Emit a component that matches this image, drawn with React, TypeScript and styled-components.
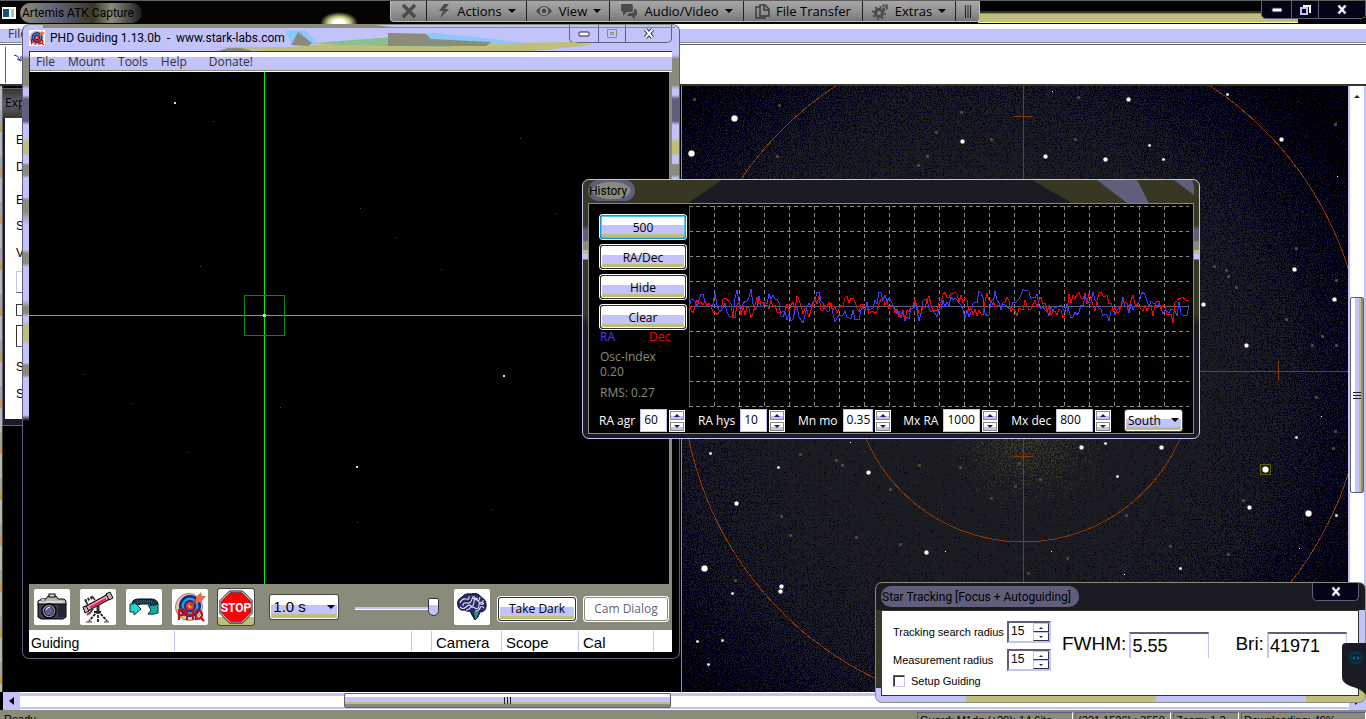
import React from "react";
import styled, { createGlobalStyle, css } from "styled-components";

const c = {
  lav: "#c3c3fb",
  olive: "#8b8b7b",
  khaki: "#bfbf7b",
  night: "#1b1b23",
  moss: "#373723",
  slate: "#5f5f7b",
  rust: "#8b3703",
};
const ui = `"Open Sans", "Noto Sans", sans-serif`;
const caption = `Roboto, "Open Sans", sans-serif`;
const arial = `"Liberation Sans", Arial, sans-serif`;
const gloss = `linear-gradient(#fff 0 42%, ${c.lav} 42% 80%, ${c.khaki} 80%)`;

const GlobalStyle = createGlobalStyle`
  * { box-sizing: border-box; }
  html, body { margin: 0; height: 100%; overflow: hidden; background: #000; }
  body { font: 12px/16px ${ui}; color: #000; }
  button, input, select { font: inherit; color: #000; margin: 0; padding: 0; border-radius: 0; }
  button { background: none; border: 0; }
  svg { display: block; flex: none; }
`;

/* ---------- main capture application ---------- */
const Shell = styled.div`
  height: 100vh;
  display: flex;
  flex-direction: column;
  overflow: hidden;
  position: relative;
  border-top: 1px solid #5f5f5f;
`;
const AppTitle = styled.header`
  height: 23px;
  flex: none;
  display: flex;
  align-items: center;
  gap: 4px;
  padding-left: 2px;
  background:
    linear-gradient(#000 0 10px, ${c.moss} 10px 12px, ${c.olive} 12px 13px, ${c.khaki} 13px 21px, #ffff8b 21px 22px, #000 22px) 978px 0 / 320px 23px no-repeat,
    radial-gradient(closest-side, #fff 30%, ${c.khaki} 60%, transparent) 320px 11px / 38px 22px no-repeat,
    #040404;
`;
const AppName = styled.h1`
  margin: 0;
  padding: 0 8px 0 2px;
  font: 12px/20px ${caption};
  border-radius: 10px;
  background: linear-gradient(90deg, ${c.olive}, ${c.slate} 30%, ${c.moss} 60%, ${c.olive} 75%, ${c.night});
`;
const Captions = styled.div<{ $dark?: boolean }>`
  margin-left: auto;
  align-self: flex-start;
  display: flex;
  height: 18px;
  border: 1px solid ${(p) => (p.$dark ? c.slate : c.slate)};
  border-top: 0;
  border-radius: 0 0 5px 5px;
  ${(p) => p.$dark && css`background: #040418;`}
`;
const Caption = styled.button<{ $w: number; $line?: string }>`
  width: ${(p) => p.$w}px;
  display: grid;
  place-items: center;
  & + & { border-left: 1px solid ${(p) => p.$line || c.slate}; }
`;
const AppMenu = styled.nav`
  height: 21px;
  flex: none;
  padding: 0 8px;
  line-height: 20px;
  color: #333;
  border-bottom: 1px solid ${c.slate};
  background: linear-gradient(#fff 0 5px, ${c.lav} 5px 18px, ${c.olive} 18px 19px, #fff 19px);
`;
const AppTools = styled.div`
  height: 41px;
  flex: none;
  padding: 2px 0 0 5px;
  background: #fff;
  border-bottom: 2px solid ${c.moss};
`;
const Workspace = styled.main`
  flex: 1;
  min-height: 0;
  display: flex;
`;
const DesktopEdge = styled.div`
  width: 3px;
  background: repeating-linear-gradient(#b7b7b7 0 24px, #a3a3a3 24px 38px, #bf9b4b 38px 46px);
  border-right: 1px solid ${c.moss};
`;
const GuidePane = styled.section`
  width: 679px;
  flex: none;
  background: #000;
  border-right: 1px solid #00ef0b;
`;
const Explorer = styled.aside`
  width: 200px;
  margin-top: 3px;
  background: ${c.night};
  border-bottom: 6px solid ${c.night};
  outline: 1px solid ${c.slate};
`;
const ExplorerTitle = styled.h2`
  margin: 0;
  height: 29px;
  padding-left: 2px;
  font: 12px/28px ${ui};
  background: linear-gradient(${c.moss}, ${c.slate} 50%, ${c.moss});
`;
const ExplorerBody = styled.div`
  height: 301px;
  padding: 15px 0 0 11px;
  margin-left: 2px;
  background: #fff;
  font: 12px/14px ${arial};
`;
const ExplorerRow = styled.div<{ $h: number }>`
  height: ${(p) => p.$h}px;
`;
const ExplorerBox = styled.div<{ $h: number; $gap: number; $c?: string }>`
  height: ${(p) => p.$h}px;
  margin-bottom: ${(p) => p.$gap}px;
  border: 1px solid ${(p) => p.$c || "#333"};
  border-bottom-color: ${c.slate};
`;
const SkyPane = styled.section`
  flex: 1;
  min-width: 0;
  overflow: hidden;
  background: #000;
  svg { width: 100%; height: 100%; }
`;
const VScroll = styled.div`
  width: 18px;
  flex: none;
  display: flex;
  flex-direction: column;
  background: #fff;
  border: solid ${c.lav};
  border-width: 0 2px;
`;
const VEnd = styled.button`
  height: 20px;
  display: grid;
  place-items: center;
`;
const VTrack = styled.div`
  flex: 1;
  display: grid;
  grid-template-rows: 191fr 196fr 179fr;
`;
const VThumb = styled.button`
  grid-row: 2;
  display: grid;
  place-items: center;
  border: 1px solid ${c.slate};
  border-radius: 2px;
  background: linear-gradient(90deg, #fff 0 4px, ${c.lav} 4px 8px, ${c.khaki} 8px 10px, ${c.olive} 10px 12px, ${c.lav} 12px);
`;
const HScroll = styled.div`
  height: 18px;
  flex: none;
  display: flex;
  margin-left: 3px;
  background: linear-gradient(#fff 0 1px, ${c.lav} 1px 4px, #fff 4px 15px, ${c.lav} 15px 17px, #fff 17px);
`;
const HEnd = styled.button`
  width: 17px;
  display: grid;
  place-items: center;
  background: ${c.lav};
`;
const HTrack = styled.div`
  flex: 1;
  display: grid;
  grid-template-columns: 324fr 327fr 677fr;
`;
const HThumb = styled.button`
  grid-column: 2;
  height: 15px;
  margin-top: 1px;
  display: grid;
  place-items: center;
  border: 1px solid ${c.slate};
  border-radius: 2px;
  background: linear-gradient(#fff 0 3px, ${c.lav} 3px 8px, ${c.khaki} 8px 10px, ${c.olive} 10px);
`;
const AppStatus = styled.footer`
  height: 9px;
  flex: none;
  overflow: hidden;
  display: flex;
  gap: 2px;
  padding: 2px 0 0 2px;
  background: ${c.olive};
  font: 11px/14px ${arial};
`;
const StatusCell = styled.span<{ $w?: number }>`
  ${(p) => (p.$w ? css`width: ${p.$w}px; border: 1px solid ${c.slate}; border-right-color: #fff;` : css`flex: 1;`)}
  padding-left: 2px;
  height: 16px;
  white-space: nowrap;
`;

/* ---------- remote session bar ---------- */
const SessionBar = styled.nav`
  position: absolute;
  left: 390px;
  top: 0;
  height: 21px;
  display: flex;
  border: 1px solid #bbb;
  border-top: 0;
  border-radius: 0 0 4px 4px;
  background: linear-gradient(#a7a7a7, #8f8f8f 60%, #777);
  overflow: hidden;
`;
const SessionButton = styled.button<{ $w: number }>`
  width: ${(p) => p.$w}px;
  display: flex;
  align-items: center;
  justify-content: center;
  gap: 6px;
  font: 13px/20px ${ui};
  white-space: nowrap;
  & + & { border-left: 1px solid #222; }
`;

/* ---------- floating windows ---------- */
const Guiding = styled.section`
  position: absolute;
  left: 22px;
  top: 23px;
  width: 658px;
  display: flex;
  flex-direction: column;
  padding: 0 7px 5px 6px;
  border: 1px solid ${c.slate};
  border-top-color: ${c.olive};
  border-radius: 7px;
  background: linear-gradient(${c.lav} 0 30px, ${c.olive} 34px 60px, ${c.lav} 64px 70px, ${c.slate} 74px 96px, ${c.lav} 100px 112px, ${c.khaki} 118px 128px, ${c.lav} 132px 138px, ${c.olive} 140px 150px, ${c.lav} 153px 172px, ${c.olive} 175px 186px, ${c.lav} 200px 225px, ${c.olive} 228px 238px, ${c.lav} 242px 275px, ${c.olive} 282px 288px, ${c.lav} 292px 296px, ${c.khaki} 300px 315px, ${c.lav} 320px 338px, ${c.olive} 340px 350px, ${c.lav} 353px 390px, #000 396px);
`;
const GuideTitle = styled.header`
  height: 26px;
  display: flex;
  align-items: center;
  gap: 5px;
  position: relative;
`;
const Blotches = styled.svg`
  position: absolute;
  left: -6px;
  top: 0;
`;
const GuideName = styled.h2`
  margin: 0;
  font: 12px/24px ${caption};
  white-space: pre;
  position: relative;
`;
const GuideMenu = styled.nav`
  height: 21px;
  display: flex;
  gap: 13px;
  padding: 3px 6px 0;
  border: solid #333;
  border-width: 1px 0 0 1px;
  background: linear-gradient(#fff 0 5px, ${c.lav} 5px 18px, ${c.olive} 18px 19px, #fff 19px);
  a { color: #333; text-decoration: none; line-height: 14px; }
  a:last-child { margin-left: 9px; }
`;
const GuideView = styled.div`
  height: 512px;
  background: #000;
  border-right: 3px solid ${c.olive};
`;
const GuideTools = styled.div`
  height: 46px;
  display: flex;
  align-items: center;
  justify-content: space-between;
  padding: 0 4px 0 5px;
  background: ${c.olive};
`;
const ToolRow = styled.div<{ $gap: number }>`
  display: flex;
  align-items: center;
  gap: ${(p) => p.$gap}px;
`;
const IconButton = styled.button<{ $framed?: boolean }>`
  width: 36px;
  height: 36px;
  display: grid;
  place-items: center;
  border-radius: 2px;
  background: #fff;
  ${(p) => p.$framed && css`
    background: linear-gradient(#fff 0 28px, ${c.khaki} 28px);
    outline: 1px solid #444;
  `}
`;
const SelectBox = styled.span<{ $w: number; $big?: boolean }>`
  position: relative;
  width: ${(p) => p.$w}px;
  height: ${(p) => (p.$big ? 26 : 23)}px;
  select {
    appearance: none;
    width: 100%;
    height: 100%;
    padding: 0 3px;
    border: 1px solid #444;
    border-radius: 3px;
    background: ${gloss};
    box-shadow: inset 0 0 0 1px #fff;
    ${(p) => p.$big && css`font: 15px/22px ${arial};`}
  }
  svg { position: absolute; right: 4px; top: ${(p) => (p.$big ? 11 : 9)}px; }
`;
const Gamma = styled.input`
  appearance: none;
  width: 84px;
  height: 20px;
  background: linear-gradient(transparent 10px, ${c.lav} 10px 12px, #fff 12px 13px, transparent 13px);
  &::-webkit-slider-thumb {
    appearance: none;
    width: 11px;
    height: 18px;
    border: 1px solid #333;
    border-radius: 2px 2px 6px 6px;
    background: linear-gradient(#fff 0 6px, ${c.lav} 6px);
  }
`;
const PushButton = styled.button<{ $w: number; $focus?: boolean }>`
  width: ${(p) => p.$w}px;
  height: 24px;
  border: 1px solid ${(p) => (p.$focus ? "#0b9fdb" : "#333")};
  border-radius: 3px;
  background: ${gloss};
  box-shadow: 0 0 0 1px #fff, inset 0 0 0 1px ${(p) => (p.$focus ? "#4bc7f7" : "#fff")};
  &:disabled { background: #fff; color: ${c.slate}; border-color: ${c.olive}; }
`;
const DarkButtons = styled.div`
  display: flex;
  gap: 8px;
  padding-top: 4px;
`;
const GuideStatus = styled.footer`
  height: 23px;
  display: flex;
  align-items: center;
  background: #fff;
  border-bottom: 1px solid #000;
  font: 15px/24px ${arial};
`;
const GuideCell = styled.span<{ $w: number; $small?: boolean }>`
  width: ${(p) => p.$w}px;
  height: 20px;
  padding-left: ${(p) => (p.$small ? 2 : 4)}px;
  border-right: 1px solid ${c.lav};
  ${(p) => p.$small && css`font-size: 14px;`}
`;

const History = styled.section`
  position: absolute;
  left: 582px;
  top: 178px;
  width: 618px;
  padding: 0 5px 4px;
  border: 1px solid ${c.lav};
  border-radius: 7px;
  background: linear-gradient(${c.moss} 0 45px, ${c.slate} 50px 60px, ${c.olive} 62px 70px, ${c.khaki} 70px 74px, ${c.lav} 74px 79px, ${c.moss} 80px 135px, ${c.night} 145px);
`;
const HistoryTitle = styled.header`
  height: 23px;
  position: relative;
  overflow: hidden;
`;
const Glow = styled.h2<{ $olive?: boolean }>`
  margin: 0;
  display: inline-block;
  position: relative;
  padding: 1px 8px 0 1px;
  font: 12px/20px ${caption};
  border-radius: 10px;
  background: ${(p) => (p.$olive ? `radial-gradient(${c.olive} 55%, ${c.slate} 60%)` : c.slate)};
`;
const HistoryBody = styled.div`
  background: #000;
  border: 1px solid ${c.olive};
  padding: 2px 4px 0 10px;
`;
const HistoryTop = styled.div`
  display: flex;
  gap: 2px;
`;
const HistorySide = styled.div`
  width: 88px;
  display: flex;
  flex-direction: column;
  gap: 6px;
  padding: 9px 1px 0;
  color: ${c.olive};
  line-height: 15px;
`;
const Legend = styled.div`
  display: flex;
  gap: 34px;
  height: 14px;
  margin-top: -6px;
  line-height: 16px;
  span:first-child { color: #3f3fff; }
  span:last-child { color: #f00; }
`;
const Reading = styled.p`
  margin: 0;
`;
const HistoryForm = styled.form`
  display: flex;
  align-items: center;
  height: 25px;
  margin-top: 1px;
  color: #fff;
  justify-content: space-between;
  padding-right: 6px;
`;
const Field = styled.label`
  display: flex;
  align-items: center;
  gap: 5px;
`;
const Num = styled.input<{ $w: number }>`
  width: ${(p) => p.$w}px;
  height: 23px;
  padding: 0 0 3px 3px;
  border: 1px solid ${c.lav};
  background: #fff;
`;
const Spin = styled.span<{ $classic?: boolean }>`
  display: grid;
  grid-template-rows: 1fr 1fr;
  width: 16px;
  height: ${(p) => (p.$classic ? 18 : 22)}px;
  margin-left: ${(p) => (p.$classic ? 0 : -3)}px;
  button {
    display: grid;
    place-items: center;
    border: 1px solid #fff;
    outline: 1px solid ${c.olive};
    outline-offset: -2px;
    background: linear-gradient(#fff 60%, ${c.lav} 60%);
    ${(p) => p.$classic && css`
      background: #fff;
      outline: 0;
      border-color: ${c.lav} #333 #333 ${c.lav};
    `}
  }
`;

const Tracking = styled.section`
  position: absolute;
  right: 0;
  bottom: 16px;
  width: 491px;
  padding: 0 6px 6px 5px;
  border: 1px solid ${c.olive};
  border-radius: 7px;
  background: linear-gradient(${c.night} 0 27px, transparent 27px), linear-gradient(90deg, ${c.moss} 50%, ${c.lav} 50%) 0 0 / 100% 105px no-repeat,
    linear-gradient(90deg, ${c.lav} 90px, ${c.khaki} 90px 280px, ${c.lav} 280px 430px, ${c.khaki} 430px);
`;
const TrackTitle = styled.header`
  height: 27px;
  display: flex;
  align-items: center;
`;
const TrackBody = styled.form`
  height: 86px;
  display: flex;
  border: 1px solid #333;
  background: #fff;
  font: 11px/14px ${arial};
  padding: 10px 0 0 11px;
`;
const TrackRows = styled.div`
  width: 158px;
  display: flex;
  flex-direction: column;
  gap: 6px;
`;
const TrackRow = styled.label`
  display: flex;
  justify-content: space-between;
  align-items: center;
`;
const Sunken = styled.span`
  display: flex;
  width: 44px;
  height: 22px;
  border: 2px solid;
  border-color: ${c.slate} ${c.lav} ${c.lav} ${c.slate};
  input { width: 24px; border: 0; padding: 0 0 2px 2px; font-size: 12px; }
`;
const Tick = styled.label`
  display: flex;
  align-items: center;
  gap: 6px;
  margin-top: -3px;
  input {
    appearance: none;
    width: 12px;
    height: 12px;
    border: 1px solid;
    border-color: ${c.slate} ${c.lav} ${c.lav} ${c.slate};
    box-shadow: inset 1px 1px #333;
  }
`;
const Gauge = styled.label<{ $ml: number }>`
  display: flex;
  gap: 3px;
  height: 26px;
  margin: 11px 0 0 ${(p) => p.$ml}px;
  font: 19px/24px ${arial};
  input {
    width: 80px;
    border: solid;
    border-width: 2px 1px 0 2px;
    border-color: ${c.slate} ${c.lav};
    padding: 0 0 0 1px;
    font-size: 18px;
  }
`;
const EdgeTab = styled.button`
  position: absolute;
  right: 0;
  bottom: 24px;
  width: 24px;
  height: 52px;
`;

/* ---------- drawings ---------- */
const Down = ({ s = 4, fill = "#000" }: { s?: number; fill?: string }) => (
  <svg width={s * 2} height={s} viewBox="0 0 8 4"><path d="M0 0h8L4 4z" fill={fill} /></svg>
);
const Up = ({ s = 3 }: { s?: number }) => <svg width={s * 2} height={s} viewBox="0 0 8 4"><path d="M0 4h8L4 0z" fill="#23233f" /></svg>;
const Grip = ({ v }: { v?: boolean }) => (
  <svg width="9" height="9" viewBox="0 0 9 9">
    <path d={v ? "M0 1.5h8M0 4.5h8M0 7.5h8" : "M1.5 1v7M4.5 1v7M7.5 1v7"} stroke="#222" strokeWidth="1" />
  </svg>
);
const MinGlyph = () => <svg width="12" height="6"><rect x="1" y="1" width="10" height="4" rx="1" fill="#fff" stroke="#23233b" /></svg>;
const CloseGlyph = ({ light }: { light?: boolean }) => (
  <svg width="12" height="11" viewBox="0 0 12 11">
    <path d="M2.5 1.5l7 8M9.5 1.5l-7 8" stroke={light ? "#23234b" : "#23233b"} strokeWidth="4" />
    <path d="M2.5 1.5l7 8M9.5 1.5l-7 8" stroke="#fff" strokeWidth="2" />
  </svg>
);

type Star = [number, number, number];
const stars: Star[] = [
  [691, 153, 3], [734, 118, 3], [962, 141, 2], [1045, 156, 2], [1105, 159, 2], [1128, 99, 2], [1149, 145, 1],
  [1163, 159, 1], [1052, 91, 0], [1227, 94, 1], [1281, 139, 2], [1337, 176, 0], [1294, 269, 2], [1334, 299, 2],
  [1246, 345, 2], [1203, 304, 2], [1321, 416, 0], [1296, 437, 1], [1265, 469, 3], [710, 453, 1], [778, 467, 1],
  [736, 503, 2], [704, 568, 3], [732, 593, 1], [781, 586, 2], [780, 591, 2], [868, 472, 2], [926, 552, 2],
  [945, 551, 0], [1051, 551, 0], [1081, 447, 2], [1105, 443, 1], [1161, 447, 2], [1117, 476, 1], [1249, 507, 2],
  [1308, 513, 3], [1336, 515, 1], [1299, 548, 0], [1180, 568, 1], [1124, 574, 0], [850, 442, 0], [697, 641, 1],
  [722, 640, 1], [708, 664, 1],
];
const faint: Star[] = [
  [694, 99, 1], [936, 132, 1], [927, 156, 1], [991, 139, 1], [961, 112, 1], [1075, 139, 1], [1078, 97, 1], [918, 165, 1],
  [777, 156, 1], [779, 105, 1], [1335, 124, 1], [1296, 248, 1], [1336, 280, 1], [1286, 319, 1], [1336, 345, 1],
  [1214, 266, 1], [1226, 270, 1], [1228, 276, 1], [1236, 287, 1], [1316, 397, 1], [1335, 431, 1], [1333, 448, 1],
  [1322, 336, 1], [1312, 345, 1], [800, 454, 1], [836, 460, 1], [842, 465, 1], [919, 465, 1], [960, 467, 1], [890, 489, 1],
  [991, 498, 1], [1126, 515, 1], [735, 580, 1], [1067, 558, 1], [1170, 546, 1], [1228, 554, 1], [1243, 500, 1],
  [1019, 463, 1], [1040, 479, 1], [1015, 486, 1], [856, 537, 1], [900, 544, 1], [1028, 573, 1], [781, 516, 1], [790, 535, 1],
];

const Sky = () => (
  <svg viewBox="682 86 666 606" preserveAspectRatio="xMinYMin slice" role="img" aria-label="Star field">
    <defs>
      <radialGradient id="level" gradientUnits="userSpaceOnUse" cx="980" cy="390" r="430">
        <stop offset="0" stopColor="#e8e8e8" />
        <stop offset=".4" stopColor="#d4d4d4" />
        <stop offset=".72" stopColor="#a0a0a0" />
        <stop offset="1" stopColor="#585858" />
      </radialGradient>
      <radialGradient id="core" gradientUnits="userSpaceOnUse" cx="1028" cy="430" r="100">
        <stop offset="0" stopColor="#d4d4d4" />
        <stop offset=".4" stopColor="#a4a4a4" />
        <stop offset="1" stopColor="#404040" />
      </radialGradient>
      <filter id="grain" x="0" y="0" width="100%" height="100%" colorInterpolationFilters="sRGB">
        <feTurbulence type="fractalNoise" baseFrequency="0.83" numOctaves="2" seed="4" result="n" />
        <feColorMatrix in="n" values="1 0 0 0 0 1 0 0 0 0 1 0 0 0 0 0 0 0 0 1" result="g" />
        <feComposite in="SourceGraphic" in2="g" operator="arithmetic" k2="1" k3="1.1" k4="-0.55" />
        <feComponentTransfer>
          <feFuncR type="discrete" tableValues="0 0 .015 .106 .106" />
          <feFuncG type="discrete" tableValues="0 0 .015 .106 .106" />
          <feFuncB type="discrete" tableValues="0 0 .13 .137 .137" />
        </feComponentTransfer>
      </filter>
      <filter id="dust" x="0" y="0" width="100%" height="100%" colorInterpolationFilters="sRGB">
        <feTurbulence type="fractalNoise" baseFrequency="0.6" numOctaves="2" seed="9" result="n" />
        <feColorMatrix in="n" values="1 0 0 0 0 1 0 0 0 0 1 0 0 0 0 0 0 0 0 1" result="g" />
        <feComposite in="SourceGraphic" in2="g" operator="arithmetic" k2="1" k3="1.6" k4="-0.8" />
        <feColorMatrix values="0 0 0 0 .216 0 0 0 0 .216 0 0 0 0 .137 12 0 0 0 -8.4" />
      </filter>
    </defs>
    <rect x="682" y="86" width="666" height="606" fill="url(#level)" filter="url(#grain)" />
    <rect x="820" y="350" width="400" height="250" fill="url(#core)" filter="url(#dust)" />
    <g fill="none" stroke={c.rust} shapeRendering="crispEdges">
      <circle cx="1023" cy="371" r="171" />
      <circle cx="1023" cy="371" r="341" />
      <path d="M1023.500 86v606M682 371.500h666M1013 116.500h20M1013 456.500h20M1278.500 361v20" />
      <rect x="1260.500" y="464.500" width="10" height="10" stroke="#5f5f00" />
    </g>
    {faint.map(([x, y], i) => <rect key={i} x={x - 1} y={y - 1} width="3" height="3" rx="1" fill={i % 3 ? "#4b4b4b" : "#4b4b37"} />)}
    {stars.map(([x, y, r], i) =>
      r ? (
        <g key={i}>
          <circle cx={x + 0.5} cy={y + 0.5} r={r + 0.6} fill="#8b8b7b" opacity=".5" />
          <circle cx={x + 0.5} cy={y + 0.5} r={r === 1 ? 1.3 : r} fill="#fff" />
        </g>
      ) : <rect key={i} x={x} y={y} width="1" height="1" fill="#fff" />
    )}
  </svg>
);

const hotPixels: Star[] = [
  [174, 102, 2], [503, 375, 2], [356, 466, 2], [200, 266, 1], [213, 121, 1], [360, 208, 1], [280, 407, 1], [395, 237, 1],
  [131, 403, 1], [84, 374, 1], [555, 213, 1], [492, 509, 1], [188, 452, 1], [441, 269, 1], [520, 138, 1], [357, 522, 1],
];
const GuideField = () => (
  <svg width="640" height="512" viewBox="29 72 640 512" role="img" aria-label="Guide camera view">
    {hotPixels.map(([x, y, r], i) => <rect key={i} x={x} y={y} width={r} height={r} fill={r > 1 ? "#dfdfcf" : "#4b4b3b"} />)}
    <g fill="none" shapeRendering="crispEdges">
      <path d="M264.500 72v512" stroke="#00ef0b" />
      <path d="M29 315.500h640" stroke="#00ef0b" />
      <rect x="244.500" y="295.500" width="40" height="40" stroke="#008b0b" />
    </g>
    <rect x="263" y="314" width="3" height="3" fill="#9bff9b" />
  </svg>
);

const ra: number[][] = [
  [0, 8], [3, -10], [8, -3], [13, -12], [17, 3], [20, 0], [26, -12], [30, 3], [37, 0], [40, 8], [45, 8], [47, -14], [52, 3], [57, -8],
  [62, -12], [67, 10], [70, -8], [75, 0], [80, -12], [87, -6], [92, 6], [97, 8], [103, 10], [108, 0], [113, 17], [117, 5], [125, -7],
  [132, -10], [137, 10], [142, 0], [147, 14], [150, 3], [155, 10], [163, 8], [170, 12], [175, -2], [180, 3], [187, -7], [192, -10],
  [204, 0], [211, 5], [218, 12], [226, 0], [231, 14], [236, -10], [241, 6], [246, 8], [251, 3], [258, -5], [264, -8], [271, -3],
  [277, 12], [283, 0], [291, -11], [298, 8], [306, -11], [313, 0], [318, 6], [324, -6], [329, 3], [333, -12], [341, -12], [351, -4],
  [358, 6], [364, 6], [371, 2], [378, 3], [386, 11], [393, -4], [399, -8], [406, -9], [413, 10], [419, 10], [426, 5], [433, -6],
  [439, 3], [448, -3], [454, -13], [459, 3], [466, -8], [473, 6], [478, 5], [486, 8], [491, 0], [496, 7], [500, 4],
];
const dec: number[][] = [
  [0, 2], [2, 9], [6, -3], [12, -9], [17, 1], [24, 4], [29, 6], [35, -3], [40, 0], [46, 12], [48, -2], [53, 5], [58, 5], [63, 8], [68, -4],
  [75, -6], [80, 2], [86, -5], [90, 8], [97, -2], [102, 3], [108, -4], [114, 7], [120, 6], [127, -6], [132, -2], [138, 3], [143, -3],
  [150, 9], [155, -5], [164, -8], [170, 3], [175, 0], [182, 4], [186, 7], [191, -3], [195, -8], [200, 2], [206, 3], [213, 8], [220, 9],
  [226, -3], [230, 4], [236, 2], [241, -6], [246, 7], [251, 1], [258, -14], [265, -8], [270, -10], [277, -2], [282, 5], [287, 6],
  [293, 9], [299, -10], [306, 2], [312, -3], [318, -5], [325, 4], [331, 6], [337, -2], [343, 3], [350, -6], [356, 3], [363, 4],
  [371, 3], [377, 12], [379, -10], [386, -6], [393, -10], [400, -7], [406, 6], [412, -16], [418, -5], [424, 2], [430, 7], [437, -2],
  [444, -5], [450, 2], [455, 3], [462, -2], [464, 9], [469, -3], [476, 4], [480, 4], [484, 13], [485, -4], [491, -3], [496, -8], [500, -7],
];
/* Resamples the key readings every two pixels and adds the seeing jitter. */
const trace = (keys: number[][], seed: number) => {
  const out: string[] = [];
  let s = seed;
  let k = 0;
  for (let x = 0; x <= 500; x += 2) {
    while (k < keys.length - 2 && keys[k + 1][0] < x) k++;
    const [a, b] = [keys[k], keys[k + 1]];
    s = (s * 16807) % 2147483647;
    const y = a[1] + ((b[1] - a[1]) * (x - a[0])) / (b[0] - a[0]) + (s / 2147483647 - 0.5) * 12;
    out.push(`${x} ${Math.round(100 + y)}`);
  }
  return out.join(" ");
};
const Graph = () => (
  <svg width="501" height="201" viewBox="0 0 501 201" role="img" aria-label="Guiding history">
    <g stroke={c.olive} strokeDasharray="4 3" shapeRendering="crispEdges">
      {Array.from({ length: 9 }, (_, i) => i !== 4 && <path key={`h${i}`} d={`M0 ${i * 25 + 0.5}H500`} />)}
      {Array.from({ length: 19 }, (_, i) => <path key={`v${i}`} d={`M${i * 25 + 25.5} 0V200`} />)}
    </g>
    <path d="M0.500 0V200M0 100.500H500" stroke={c.slate} shapeRendering="crispEdges" />
    <g fill="none" shapeRendering="crispEdges">
      <polyline points={trace(ra, 71)} stroke="#3f3fff" />
      <polyline points={trace(dec, 913)} stroke="#f00" />
    </g>
  </svg>
);

const TargetArt = styled.svg`
  position: relative;
`;
const Target = ({ size }: { size: number }) => (
  <TargetArt width={size} height={size} viewBox="0 0 32 32">
    <rect width="32" height="32" fill="#fff" />
    <circle cx="15" cy="16" r="13.500" fill="#efc79b" stroke="#8b7b7b" />
    <circle cx="16" cy="15" r="11" fill="#13278b" />
    <circle cx="16" cy="15" r="8.500" fill="#2b9bdf" />
    <circle cx="16" cy="15" r="6" fill="#13278b" />
    <circle cx="16" cy="15" r="4" fill="#ef3b1b" />
    <circle cx="16" cy="15" r="1.800" fill="#ffdf3b" />
    <path d="M16 15L27 5" stroke="#b73b1b" strokeWidth="2" />
    <path d="M22 6l5-5 1 4 4 0-5 6-5 1z" fill="#ef6b4b" />
    <g fill="none" stroke="#bf0f1b" strokeWidth="2.200">
      <path d="M5 29V19q6-2 6 2t-6 3M13 18v11M19 18v11M13 24h6M22 19v9q6 0 6-4.500T22 19M26 26l4 4" />
    </g>
  </TargetArt>
);
const CameraIcon = () => (
  <svg width="32" height="32" viewBox="0 0 32 32">
    <path d="M2 10l4-2h4l2-3h8l2 3h6l2 2v4H2z" fill="#b7b7ab" stroke="#000" />
    <rect x="13" y="3" width="6" height="3" fill="#dfdfdf" stroke="#000" />
    <path d="M2 13h28v13l-3 2H5l-3-2z" fill="#3b3b53" stroke="#000" />
    <path d="M22 14h7v12h-7z" fill="#23233b" />
    <path d="M3 11h24" stroke="#fff" />
    <rect x="5" y="8" width="4" height="2" fill="#fff" stroke="#333" strokeWidth=".6" />
    <circle cx="13" cy="20" r="7" fill="#8b8b9b" stroke="#000" strokeWidth="1.400" />
    <circle cx="13" cy="20" r="4.600" fill="#5f5f8b" stroke="#23233b" />
    <path d="M10 19q1-3 4-3" stroke="#fff" fill="none" />
  </svg>
);
const ScopeIcon = () => (
  <svg width="34" height="34" viewBox="0 0 34 34">
    <path d="M5 19L29 6" stroke="#000" strokeWidth="6" />
    <path d="M6 18.500L28 6.500" stroke="#f7a3bf" strokeWidth="4" />
    <path d="M9 17.500L25 9" stroke="#e7234b" strokeWidth="2" />
    <path d="M25 4l4-2 3 6-4 2zM2 17l3-1 3 5-4 2z" fill="#b7b7b7" stroke="#000" />
    <path d="M4 11l8-4" stroke="#333" strokeWidth="3" strokeDasharray="2 1" />
    <path d="M4 10l3 5M11 6l3 4" stroke="#333" strokeWidth="1.500" />
    <path d="M17 15v6" stroke="#333" strokeWidth="3" />
    <path d="M12 19l-4 5" stroke="#333" strokeWidth="2" />
    <path d="M6 25l2-2" stroke="#c71b2b" strokeWidth="2" />
    <path d="M17 21L8 31M17 21l9 10M17 21v11M13 22h8" stroke="#222" strokeWidth="1.800" strokeDasharray="3 1" />
    <path d="M5 32h6M23 32h5" stroke="#333" />
  </svg>
);
const LoopIcon = () => (
  <svg width="32" height="32" viewBox="0 0 32 32">
    <path d="M4 12Q5 8 11 8h12q6 0 7 5l-2 3q-3-3-7-3h-8q-4 0-6 4z" fill="#133b4b" stroke="#000" />
    <path d="M9 10h15M7 12h20" stroke="#1b7b8b" strokeDasharray="1 1" />
    <path d="M2 13h4v-2l7 7-7 6v-3H2z" fill="#2bd3d3" stroke="#003b3b" />
    <path d="M20 14q4 2 10-1v9q-5 2-10 1l3-4z" fill="#13abab" stroke="#003b3b" />
  </svg>
);
const StopIcon = () => (
  <svg width="34" height="34" viewBox="0 0 34 34">
    <path d="M10.500 1h13L33 10.500v13L23.500 33h-13L1 23.500v-13z" fill="#fff" stroke="#000" />
    <path d="M11 2.500h12L31.500 11v12L23 31.500H11L2.500 23V11z" fill="#fb0007" stroke="#000" strokeWidth=".5" />
    <text x="17" y="22" textAnchor="middle" fill="#fff" fontFamily="'Liberation Sans Narrow', Roboto, sans-serif" fontWeight="700" fontSize="12">STOP</text>
  </svg>
);
const BrainIcon = () => (
  <svg width="32" height="32" viewBox="0 0 32 32">
    <path d="M2 15Q0 9 6 6q3-4 9-3 7-2 10 3 6 3 5 10-1 5-6 5l-2 5-3 3-3-5-2-4q-3 1-5-1-6 1-7-4z" fill="#2b2b6b" stroke="#0b0b2b" />
    <path d="M17 20h7l-3 7-2 2z" fill="#2b8b8b" stroke="#0b2b2b" />
    <g fill="none" stroke="#e3e3f7" strokeWidth="1.100">
      <path d="M4 12q2-5 6-4t3-3M7 15q0-4 4-3t5-4 4 0 4-2M4 16q3 3 6 0t5-1 3-4 5 0 4-2M10 19q3 0 4-2t5 0 4-3 5-1M17 7q2 2 5 0M19 20q4 0 5-3t4 0" />
    </g>
  </svg>
);

const Spinner = ({ label, classic }: { label: string; classic?: boolean }) => (
  <Spin $classic={classic}>
    <button type="button" aria-label={`Increase ${label}`}><Up s={classic ? 2 : 3} /></button>
    <button type="button" aria-label={`Decrease ${label}`}><Down s={classic ? 2 : 3} fill="#23233f" /></button>
  </Spin>
);

const settings: [string, string, number][] = [
  ["RA agr", "60", 27], ["RA hys", "10", 27], ["Mn mo", "0.35", 30], ["Mx RA", "1000", 37], ["Mx dec", "800", 37],
];

export default function App() {
  return (
    <>
      <GlobalStyle />
      <Shell>
        <AppTitle>
          <svg width="14" height="12"><rect width="14" height="12" fill="#fff" /><rect x="1" y="2" width="6" height="8" fill="#13537b" /><rect x="9" y="2" width="3" height="8" fill="#9bc7b7" /></svg>
          <AppName>Artemis ATK Capture</AppName>
          <Captions $dark>
            <Caption $w={29} $line={c.moss} aria-label="Minimize"><MinGlyph /></Caption>
            <Caption $w={27} $line={c.moss} aria-label="Restore">
              <svg width="12" height="12"><path d="M4 2h7v7" fill="none" stroke="#fff" strokeWidth="2" /><rect x="2" y="4" width="6" height="6" fill="none" stroke={c.lav} strokeWidth="2" /></svg>
            </Caption>
            <Caption $w={47} $line={c.moss} aria-label="Close"><CloseGlyph light /></Caption>
          </Captions>
        </AppTitle>
        <AppMenu>File</AppMenu>
        <AppTools>
          <svg width="20" height="36" fill="none"><path d="M.5 0v36" stroke={c.slate} /><path d="M9 8q4 0 6 5M12 12l4 2V9" stroke="#1b1bb7" /></svg>
        </AppTools>
        <Workspace>
          <DesktopEdge />
          <GuidePane>
            <Explorer>
              <ExplorerTitle>Exp</ExplorerTitle>
              <ExplorerBody>
                <ExplorerRow $h={27}>E</ExplorerRow>
                <ExplorerRow $h={33}>D</ExplorerRow>
                <ExplorerRow $h={26}>E</ExplorerRow>
                <ExplorerRow $h={27}>S</ExplorerRow>
                <ExplorerRow $h={25}>V</ExplorerRow>
                <ExplorerBox $h={22} $gap={11} $c={c.lav} />
                <ExplorerBox $h={12} $gap={9} />
                <ExplorerBox $h={22} $gap={13} />
                <ExplorerRow $h={27}>S</ExplorerRow>
                <ExplorerRow $h={20}>S</ExplorerRow>
              </ExplorerBody>
            </Explorer>
          </GuidePane>
          <SkyPane><Sky /></SkyPane>
          <VScroll>
            <VEnd aria-label="Scroll up"><Up /></VEnd>
            <VTrack><VThumb aria-label="Vertical scroll"><Grip v /></VThumb></VTrack>
            <VEnd aria-label="Scroll down"><Down s={3} /></VEnd>
          </VScroll>
        </Workspace>
        <HScroll>
          <HEnd aria-label="Scroll left"><svg width="5" height="8"><path d="M5 0v8L0 4z" /></svg></HEnd>
          <HTrack><HThumb aria-label="Horizontal scroll"><Grip /></HThumb></HTrack>
          <HEnd aria-label="Scroll right"><svg width="5" height="8"><path d="M0 0v8l5-4z" /></svg></HEnd>
        </HScroll>
        <AppStatus>
          <StatusCell>Ready</StatusCell>
          <StatusCell $w={156}>Guard: M1dg (±20): 14.6ite</StatusCell>
          <StatusCell $w={96}>(221,1526) : 3550</StatusCell>
          <StatusCell $w={66}>Zoom: 1.2</StatusCell>
          <StatusCell $w={125}>Downloading: 49%</StatusCell>
        </AppStatus>

        <SessionBar>
          <SessionButton $w={35} aria-label="Close session">
            <svg width="16" height="16"><path d="M2 2l12 12M14 2L2 14" stroke="#4b4b4b" strokeWidth="3.500" /></svg>
          </SessionButton>
          <SessionButton $w={100}>
            <svg width="14" height="16"><path d="M7 1h5L8 6h4L3 15l3-7H2z" fill="#4b4b4b" /></svg>Actions<Down />
          </SessionButton>
          <SessionButton $w={83}>
            <svg width="18" height="14"><path d="M1 7q8-10 16 0-8 10-16 0z" fill="#4b4b4b" /><circle cx="9" cy="7" r="4" fill="#a7a7a7" /><circle cx="9" cy="7" r="2.500" fill="#4b4b4b" /></svg>View<Down />
          </SessionButton>
          <SessionButton $w={134}>
            <svg width="18" height="17"><path d="M2 1h9q2 0 2 2v4q0 2-2 2H7l-4 4V9Q1 9 1 7V3q0-2 1-2z" fill="#4b4b4b" /><path d="M14 6q3 0 3 2v3q0 2-2 2v3l-4-3H7l2-3h3q2 0 2-2z" fill="#4b4b4b" /></svg>Audio/Video<Down />
          </SessionButton>
          <SessionButton $w={119}>
            <svg width="15" height="17" fill="none" stroke="#3b3b3b" strokeWidth="1.500"><path d="M5 2h5l4 4v7H5zM5 4H1v11h9v-2M9 2v5h5" /></svg>File Transfer
          </SessionButton>
          <SessionButton $w={93}>
            <svg width="17" height="17" fill="none" stroke="#4b4b4b"><circle cx="7" cy="10" r="3.500" strokeWidth="3" /><circle cx="7" cy="10" r="6" strokeWidth="2" strokeDasharray="2 2.700" /><circle cx="13" cy="4" r="2" strokeWidth="2.500" strokeDasharray="2 1" /></svg>Extras<Down />
          </SessionButton>
          <SessionButton $w={24} aria-label="Move bar"><svg width="6" height="13"><path d="M.5 0v13M3 0v13M5.500 0v13" stroke="#222" /></svg></SessionButton>
        </SessionBar>

        <Guiding>
          <GuideTitle>
            <Blotches width="656" height="26" aria-hidden="true">
              <path d="M20 0h330l20 2h282v1H20z" fill={c.olive} />
              <path d="M190 22l80 0 60-6 40 4 180-3 20 3-60 6H240z" fill={c.khaki} />
              <path d="M262 6l20-1 13 14-25 2zM362 8l50 0 50 5 40 5-100 2z" fill="#8bc7fb" />
              <path d="M290 18l80-6 90 6-40 4-100-2z" fill="#8bbf8b" />
              <path d="M268 20l7-13 14 11-4 3zM365 8l38 1 5 5 60 3-5 4-98 0zM195 26l10-3h14l10 3z" fill={c.olive} />
            </Blotches>
            <Target size={16} />
            <GuideName>PHD Guiding 1.13.0b  -  www.stark-labs.com</GuideName>
            <Captions>
              <Caption $w={28} aria-label="Minimize guiding"><MinGlyph /></Caption>
              <Caption $w={27} aria-label="Maximize guiding"><svg width="12" height="10" fill="none" stroke={c.olive}><path d="M1.500.5h9v8h-9zM4.500 3.500h3v2h-3z" /></svg></Caption>
              <Caption $w={46} aria-label="Close guiding"><CloseGlyph /></Caption>
            </Captions>
          </GuideTitle>
          <GuideMenu>
            {["File", "Mount", "Tools", "Help", "Donate!"].map((m) => <a key={m} href="#menu">{m}</a>)}
          </GuideMenu>
          <GuideView><GuideField /></GuideView>
          <GuideTools>
            <ToolRow $gap={10}>
              <IconButton aria-label="Connect camera"><CameraIcon /></IconButton>
              <IconButton aria-label="Connect scope"><ScopeIcon /></IconButton>
              <IconButton aria-label="Loop exposures"><LoopIcon /></IconButton>
              <IconButton aria-label="Guide"><Target size={32} /></IconButton>
              <IconButton $framed><StopIcon /></IconButton>
            </ToolRow>
            <SelectBox $w={70} $big>
              <select aria-label="Exposure"><option>1.0 s</option></select><Down />
            </SelectBox>
            <Gamma type="range" aria-label="Gamma" defaultValue={100} />
            <ToolRow $gap={8}>
              <IconButton aria-label="Advanced setup"><BrainIcon /></IconButton>
              <DarkButtons>
                <PushButton $w={78}>Take Dark</PushButton>
                <PushButton $w={84} disabled>Cam Dialog</PushButton>
              </DarkButtons>
            </ToolRow>
          </GuideTools>
          <GuideStatus>
            <GuideCell $w={146} $small>Guiding</GuideCell>
            <GuideCell $w={237} />
            <GuideCell $w={20} />
            <GuideCell $w={70}>Camera</GuideCell>
            <GuideCell $w={77}>Scope</GuideCell>
            <GuideCell $w={75}>Cal</GuideCell>
          </GuideStatus>
        </Guiding>

        <History>
          <HistoryTitle>
            <Blotches width="618" height="23" aria-hidden="true">
              <path d="M0 0h140l-34 23H0z" fill={c.moss} />
              <path d="M140 0h310l40 23H106z" fill={c.night} />
              <path d="M515 0h40l12 23h-22zM592 0h18l6 18z" fill={c.slate} />
            </Blotches>
            <Glow $olive>History</Glow>
          </HistoryTitle>
          <HistoryBody>
            <HistoryTop>
              <HistorySide>
                <PushButton $w={86} $focus>500</PushButton>
                <PushButton $w={86}>RA/Dec</PushButton>
                <PushButton $w={86}>Hide</PushButton>
                <PushButton $w={86}>Clear</PushButton>
                <Legend><span>RA</span><span>Dec</span></Legend>
                <Reading>Osc-Index<br />0.20</Reading>
                <Reading>RMS: 0.27</Reading>
              </HistorySide>
              <Graph />
            </HistoryTop>
            <HistoryForm>
              {settings.map(([name, value, w]) => (
                <Field key={name}>{name}<Num $w={w} defaultValue={value} /><Spinner label={name} /></Field>
              ))}
              <SelectBox $w={59}><select aria-label="Dec guide mode"><option>South</option></select><Down /></SelectBox>
            </HistoryForm>
          </HistoryBody>
        </History>

        <Tracking>
          <TrackTitle>
            <Glow>Star Tracking [Focus + Autoguiding]</Glow>
            <Captions $dark><Caption $w={45} aria-label="Close tracking"><CloseGlyph light /></Caption></Captions>
          </TrackTitle>
          <TrackBody>
            <TrackRows>
              <TrackRow>Tracking search radius<Sunken><input defaultValue="15" /><Spinner classic label="search radius" /></Sunken></TrackRow>
              <TrackRow>Measurement radius<Sunken><input defaultValue="15" /><Spinner classic label="measurement radius" /></Sunken></TrackRow>
              <Tick><input type="checkbox" />Setup Guiding</Tick>
            </TrackRows>
            <Gauge $ml={11}>FWHM:<input defaultValue="5.55" /></Gauge>
            <Gauge $ml={26}>Bri:<input defaultValue="41971" /></Gauge>
          </TrackBody>
        </Tracking>
        <EdgeTab aria-label="Remote panel">
          <svg width="24" height="52"><path d="M4 0h20v52Q20 46 8 43 0 40 0 34V4q0-4 4-4z" fill={c.night} /><rect x="6" y="7" width="16" height="16" rx="5" fill="#0b2333" /><circle cx="14" cy="15" r="5.500" fill="none" stroke="#13435b" /><path d="M10 15l3-2v4zM18 15l-3-2v4z" fill="#1b5b73" /></svg>
        </EdgeTab>
      </Shell>
    </>
  );
}
